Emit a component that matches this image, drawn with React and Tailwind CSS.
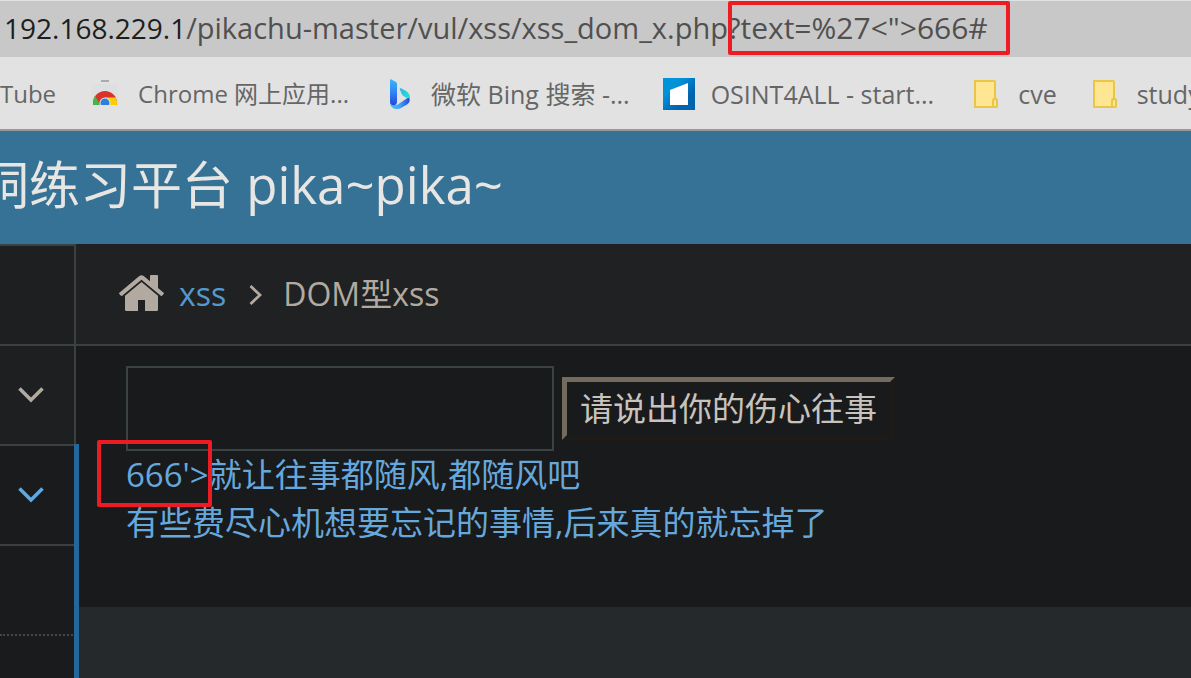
import React from 'react'

const Mark = ({ className }) => (
  <span
    aria-hidden="true"
    className={`absolute border-4 border-[#ed1c24] rounded-xs pointer-events-none ${className}`}
  />
)

const ChromeIcon = () => (
  <svg width="26" height="28" viewBox="0 0 26 28" className="shrink-0">
    <defs>
      <clipPath id="store"><rect x="0" y="4" width="26" height="21" /></clipPath>
      <clipPath id="wheel"><circle cx="13" cy="23" r="12" /></clipPath>
    </defs>
    <rect x="9" y="0" width="8" height="2" fill="#a9abae" />
    <rect x="0" y="4" width="26" height="21" fill="#dddfe1" />
    <g clipPath="url(#store)">
      <g clipPath="url(#wheel)">
        <rect x="0" y="10" width="26" height="18" fill="#dc3328" />
        <path d="M13 17.500 H26 V28 H13 Z" fill="#fdcb08" />
        <path d="M3 15.500 L10 28 H0 V15.500 Z" fill="#47b34b" />
      </g>
      <circle cx="13" cy="23" r="5.500" fill="#dfeaf5" />
      <circle cx="13" cy="23" r="4.500" fill="#2f7fd8" />
    </g>
  </svg>
)

const BingIcon = () => (
  <svg width="22" height="30" viewBox="0 0 22 30" className="shrink-0">
    <defs>
      <linearGradient id="b1" x1="0" y1="0" x2="0" y2="1">
        <stop offset="0" stopColor="#3cb6f8" />
        <stop offset="0.500" stopColor="#2f86f5" />
        <stop offset="1" stopColor="#2546de" />
      </linearGradient>
      <linearGradient id="b2" x1="0" y1="0" x2="1" y2="1">
        <stop offset="0" stopColor="#21b9f0" />
        <stop offset="1" stopColor="#2ee6c8" />
      </linearGradient>
      <linearGradient id="b3" x1="0" y1="0" x2="1" y2="0">
        <stop offset="0" stopColor="#45c6f8" />
        <stop offset="0.500" stopColor="#43a3f6" />
        <stop offset="1" stopColor="#2148dc" />
      </linearGradient>
    </defs>
    <path d="M1 23 L8 26 L20 18 C21.500 21 20.500 24 18 25.500 L12 29 C9 30.500 6 30.300 4 29 C2 27.700 1 26 1 23 Z" fill="url(#b3)" />
    <path d="M1 1.200 C1 0.300 1.800 0 2.600 0.400 L6.500 2.800 C7.600 3.500 8 4.200 8 5.300 V22.500 C8 25 6.500 26.300 4.500 26.300 C2.500 26.300 1 25 1 22.500 Z" fill="url(#b1)" />
    <path d="M10.800 10.300 C10.500 9.500 11 9 12 9.300 L17 12 C20 13.700 21.500 16.500 21 20.500 C20.500 18.800 19 18.500 17.500 19 L14.500 17 C13.500 16.500 13 15.800 12.700 15 Z" fill="url(#b2)" />
  </svg>
)

const StartIcon = () => (
  <svg width="32" height="32" viewBox="0 0 32 32" className="shrink-0">
    <defs>
      <linearGradient id="st" x1="0" y1="0" x2="1" y2="1">
        <stop offset="0.300" stopColor="#0292d8" />
        <stop offset="0.700" stopColor="#0063ae" />
      </linearGradient>
    </defs>
    <rect width="32" height="32" fill="url(#st)" />
    <path d="M7 12 L25 5 V27 H7 Z" fill="#fff" />
  </svg>
)

const FolderIcon = () => (
  <svg width="24" height="28" viewBox="0 0 24 28" className="shrink-0" fill="#ffe693" stroke="#eac645" strokeWidth="2">
    <path d="M1 1 H20 Q21 1 21 2 V18.500 L23 20 V26 Q23 27 22 27 H1 Z" />
    <path d="M19 27 V20.500 Q19 19 21 19 Q23 19 23 20.500 V25.500 Q23 27 21 27 Z" />
  </svg>
)

const HomeIcon = () => (
  <svg width="45" height="36" viewBox="0 0 45 36" fill="#b2aaa0" className="shrink-0">
    <path d="M20.300 1 Q22.500 -0.700 24.700 1 L31 6.300 V1 Q31 0 32 0 H38 Q39 0 39 1 V13 L44.600 17.800 Q45.200 18.400 44.700 19 L43 20.800 Q42.400 21.300 41.800 20.800 L22.500 4.800 L3.200 20.800 Q2.600 21.300 2 20.800 L0.300 19 Q-0.200 18.400 0.400 17.800 Z" />
    <path d="M22.500 7 L39 20.700 V34.800 Q39 36 37.800 36 H26 V25 H19 V36 H7.200 Q6 36 6 34.800 V20.700 Z" />
  </svg>
)

const Chevron = () => (
  <svg width="26" height="16" viewBox="0 0 26 16" fill="none" stroke="currentColor" strokeWidth="3.600">
    <path d="M1.500 1.500 L13 13 L24.500 1.500" />
  </svg>
)

const bookmarks = [
  { label: 'Chrome 网上应用...', icon: <ChromeIcon />, cls: 'ml-9 gap-5 text-[24px]' },
  { label: '微软 Bing 搜索 -...', icon: <BingIcon />, cls: 'ml-10 gap-5 text-[25px]' },
  { label: 'OSINT4ALL - start...', icon: <StartIcon />, cls: 'ml-[33px] gap-4 text-[25px]' },
  { label: 'cve', icon: <FolderIcon />, cls: 'ml-10 gap-5 text-[25px]' },
  { label: 'study', icon: <FolderIcon />, cls: 'ml-9 gap-5 text-[25px]' },
]

export default function App() {
  return (
    <div className="min-h-screen flex flex-col overflow-hidden bg-[#25292b] font-['Open_Sans','Noto_Sans_CJK_SC',sans-serif]">
      {/* Address bar */}
      <div className="h-[57px] shrink-0 flex items-baseline pt-[7px] pl-1 border-t border-[#e2e2e2] bg-[#c8c8c8] text-[29px] leading-10 text-[#505050] whitespace-nowrap">
        <span className="text-[28px] text-[#1e1e1e]">192.168.229.1</span>
        <span>/pikachu-master/vul/xss/xss_dom_x.php?</span>
        <span className="relative text-[30px]">
          {'text=%27<">666#'}
          <Mark className="-inset-y-[7px] -left-3 -right-[22px]" />
        </span>
      </div>

      {/* Bookmarks */}
      <nav className="h-[74px] shrink-0 flex items-center pt-px border-b-2 border-[#999] bg-[#e2e2e2] text-[24px] leading-8 text-[#666] whitespace-nowrap overflow-hidden">
        <a href="#tube">Tube</a>
        {bookmarks.map((b) => (
          <a key={b.label} href="#bookmark" className={`flex items-center ${b.cls}`}>
            {b.icon}
            {b.label}
          </a>
        ))}
      </nav>

      {/* Header */}
      <header className="h-[113px] shrink-0 flex items-center pb-2 bg-[#367295] text-[#e8e6e3] overflow-hidden">
        <h1 className="-ml-[22px] text-[51px] leading-[64px] whitespace-nowrap">洞练习平台 pika~pika~</h1>
      </header>

      <div className="flex-1 flex">
        {/* Sidebar */}
        <aside className="w-[76px] shrink-0 flex flex-col bg-[#1e1f21]">
          <div className="h-[102px] border-y-2 border-r-2 border-[#3b4041]" />
          <button type="button" aria-label="Expand" className="h-[98px] flex items-center pl-[18px] border-r-2 border-[#3b4041] text-[#b2aaa0]">
            <Chevron />
          </button>
          <div className="relative flex-1 flex flex-col bg-[#1a1b1c]">
            <button type="button" aria-label="Collapse" className="h-[102px] flex items-center pl-[18px] border-y-2 border-[#3b4041] text-[#5fa8e0]">
              <Chevron />
            </button>
            <div className="h-[90px] border-b-2 border-dotted border-[#454749]" />
            <div className="absolute inset-y-0 -right-[3px] w-[5px] bg-[#23679b]" />
          </div>
        </aside>

        <main className="flex-1 min-w-0">
          <nav className="h-[102px] flex items-center pl-[43px] pb-0.5 border-b-2 border-[#3b4041] bg-[#202122] text-[32px] leading-[50px] text-[#b2aaa0]">
            <HomeIcon />
            <a href="#xss" className="ml-[15px] pt-0.5 text-[#5498cc]">xss</a>
            <svg width="13" height="20" viewBox="0 0 13 20" fill="none" stroke="currentColor" strokeWidth="2.800" className="mt-1 ml-[23px] mr-[21px]">
              <path d="M1.500 1 L11 10 L1.500 19" />
            </svg>
            <span className="pt-0.5">DOM型xss</span>
          </nav>

          <section className="pt-5 pl-[50px] pb-[60px] bg-[#191a1b] text-[33px] leading-[48px] text-[#66a8dc] whitespace-nowrap">
            <form className="flex items-center gap-2" onSubmit={(e) => e.preventDefault()}>
              <input type="text" aria-label="text" className="w-[428px] h-[85px] px-3 border-2 border-[#3b4243] bg-transparent text-[#c8c3bc] outline-none" />
              <button type="submit" className="h-[63px] px-[13px] flex items-center border-[5px] border-t-[#736b5e] border-l-[#736b5e] border-r-[#1e1a18] border-b-[#1e1a18] text-[#c8c3bc]">
                请说出你的伤心往事
              </button>
            </form>
            <a href="#onclick" className="block">
              <span className="relative">
                {"666'>"}
                <Mark className="-top-3 -bottom-[10px] -left-[29px] -right-[3px]" />
              </span>
              就让往事都随风,都随风吧
            </a>
            <a href="#onclick" className="block">有些费尽心机想要忘记的事情,后来真的就忘掉了</a>
          </section>
        </main>
      </div>
    </div>
  )
}
